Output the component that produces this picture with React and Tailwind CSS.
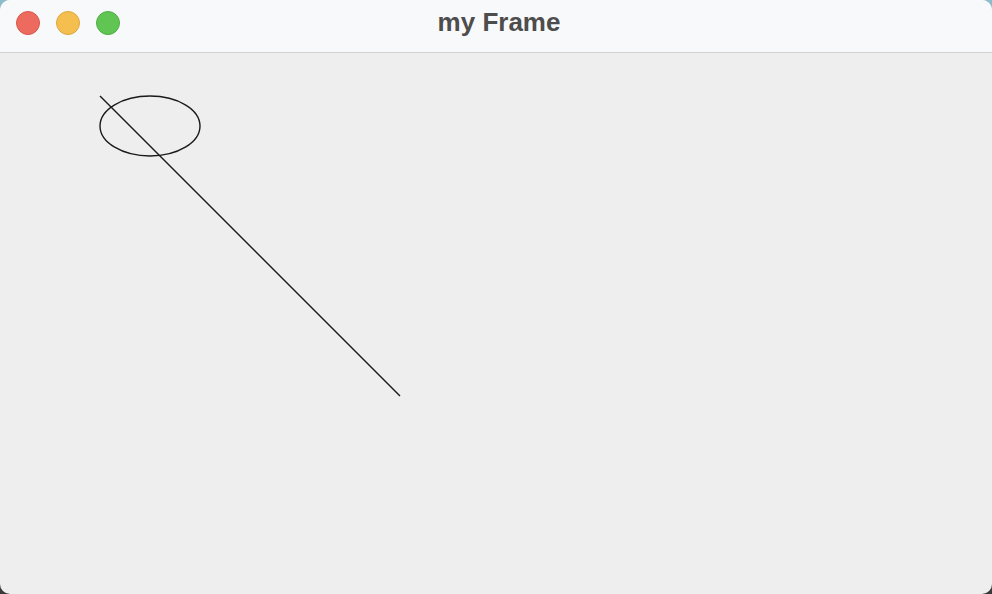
export default function App() {
  return (
    <div className="w-[992px] h-[594px] bg-gradient-to-b from-[#8fbccc] to-[#3a3a3a] overflow-hidden">
      <div className="w-full h-full rounded-[10px] overflow-hidden flex flex-col bg-[#eeeeee]">
        <div className="h-[53px] shrink-0 bg-[#f8f9fa] border-b border-[#d2d2d2] relative flex items-center justify-center">
          <div className="absolute left-[16px] top-[11px] flex gap-[16px]">
            <div className="w-[24px] h-[24px] rounded-full bg-[#ed6a5e] border border-[#d9574c]" />
            <div className="w-[24px] h-[24px] rounded-full bg-[#f5bf4f] border border-[#dca83c]" />
            <div className="w-[24px] h-[24px] rounded-full bg-[#61c554] border border-[#4fae43]" />
          </div>
          <span
            className="text-[26px] font-bold text-[#4d4d4d] leading-none -mt-[8px] pl-[6px]"
            style={{ fontFamily: '"Liberation Sans", Arial, sans-serif' }}
          >
            my Frame
          </span>
        </div>
        <div className="flex-1 relative">
          <svg width="992" height="541" className="block" viewBox="0 53 992 541">
            <ellipse cx="150" cy="126" rx="50" ry="30" fill="none" stroke="#1a1a1a" strokeWidth="1.4" />
            <line x1="100" y1="96" x2="400" y2="396" stroke="#1a1a1a" strokeWidth="1.4" />
          </svg>
        </div>
      </div>
    </div>
  );
}
